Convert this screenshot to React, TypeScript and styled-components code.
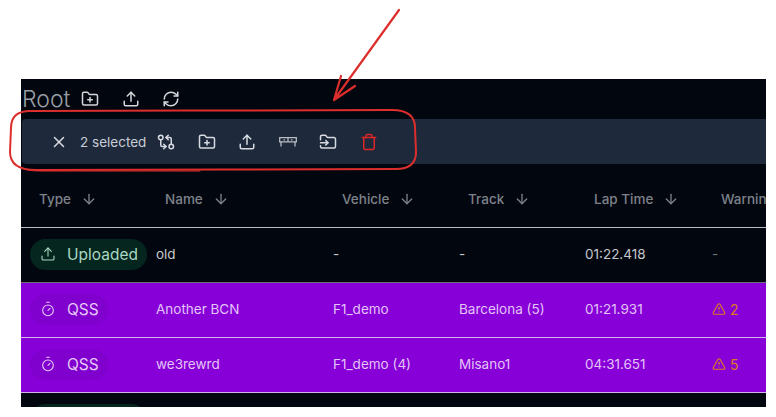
import React from 'react';
import styled, { createGlobalStyle } from 'styled-components';
import {
  ArrowDown,
  FolderInput,
  FolderPlus,
  GitCompareArrows,
  RefreshCw,
  Timer,
  Trash,
  TriangleAlert,
  Upload,
  X,
} from 'lucide-react';

const GlobalStyle = createGlobalStyle`
  html, body {
    margin: 0;
    background: #fff;
    font-family: "Inter", "Liberation Sans", sans-serif;
  }
`;

const columns = ['Type', 'Name', 'Vehicle', 'Track', 'Lap Time', 'Warnings'];

const rows = [
  { kind: 'Uploaded', name: 'old', vehicle: '-', track: '-', lap: '01:22.418', warnings: 0, selected: false },
  { kind: 'QSS', name: 'Another BCN', vehicle: 'F1_demo', track: 'Barcelona (5)', lap: '01:21.931', warnings: 2, selected: true },
  { kind: 'QSS', name: 'we3rewrd', vehicle: 'F1_demo (4)', track: 'Misano1', lap: '04:31.651', warnings: 5, selected: true },
];

const BenchIcon = () => (
  <BenchSvg width="18" height="18" viewBox="0 0 18 18" fill="none" stroke="currentColor" strokeWidth="1.3">
    <path d="M0.7 4.7h16.6v4.2H0.7zM2 8.9v4.6M16 8.9v4.6M9 4.7v4.2M4.5 6.8h1.5M12 6.8h1.5" />
  </BenchSvg>
);

const Annotation = () => (
  <Overlay width="776" height="417" viewBox="0 0 776 417" fill="none" stroke="#dc2f2d" strokeLinecap="round" strokeLinejoin="round">
    <path strokeWidth="2.2" d="M399 10 L334 100 M341 76 L334 100 L355 86" />
    <path
      strokeWidth="2"
      d="M30 111 C140 111 300 110 392 110 C408 110 415 116 415 128 L416 152 C416 164 409 169 396 169 C300 170 120 169 36 170 C20 170 10 165 10 152 L11 128 C11 116 18 111 30 111 Z"
    />
    <path strokeWidth="1" d="M14 163 C20 170 30 171 42 171 L200 171" />
  </Overlay>
);

const App = () => {
  return (
    <Page>
      <GlobalStyle />
      <Panel>
        <TitleRow>
          <RootTitle>Root</RootTitle>
          <TitleIcons>
            <FolderPlus size={18} />
            <Upload size={18} />
            <RefreshCw size={18} />
          </TitleIcons>
        </TitleRow>
        <SelectionBar>
          <X size={18} />
          <SelectedText>2 selected</SelectedText>
          <BarIcons>
            <GitCompareArrows size={18} />
            <FolderPlus size={18} />
            <Upload size={18} />
            <BenchIcon />
            <FolderInput size={18} />
            <DangerIcon>
              <Trash size={18} />
            </DangerIcon>
          </BarIcons>
        </SelectionBar>
        <HeaderRow>
          {columns.map((column) => (
            <HeaderCell key={column}>
              {column}
              <ArrowDown size={16} />
            </HeaderCell>
          ))}
        </HeaderRow>
        {rows.map((row) => (
          <Row key={row.name} $selected={row.selected}>
            <TypeCell>
              <Badge $selected={row.selected}>
                {row.selected ? <Timer size={16} strokeWidth={1.6} /> : <Upload size={16} strokeWidth={1.6} />}
                {row.kind}
              </Badge>
            </TypeCell>
            <Cell>{row.name}</Cell>
            <Cell>{row.vehicle}</Cell>
            <Cell>{row.track}</Cell>
            <Cell>{row.lap}</Cell>
            {row.warnings > 0 ? (
              <WarningCell>
                <TriangleAlert size={14} />
                {row.warnings}
              </WarningCell>
            ) : (
              <MutedCell>-</MutedCell>
            )}
          </Row>
        ))}
        <Row $selected={false}>
          <TypeCell>
            <Badge $selected={false}>
              <Upload size={16} strokeWidth={1.6} />
              Uploaded
            </Badge>
          </TypeCell>
        </Row>
      </Panel>
      <Annotation />
    </Page>
  );
};

const Page = styled.div`
  width: 776px;
  height: 417px;
  box-sizing: border-box;
  padding: 79px 10px 10px 21px;
  overflow: hidden;
`;

const Panel = styled.div`
  height: 328px;
  background: #02060f;
  overflow: hidden;
  filter: blur(0.3px);
`;

const TitleRow = styled.div`
  height: 40px;
  display: flex;
  align-items: center;
  padding-left: 1px;
`;

const RootTitle = styled.div`
  font-size: 23px;
  font-weight: 300;
  line-height: 40px;
  color: #9a9ea5;
  width: 60px;
`;

const TitleIcons = styled.div`
  display: flex;
  gap: 22.5px;
  align-items: center;
  margin-left: -1px;
  color: #d5d7da;
`;

const SelectionBar = styled.div`
  height: 45px;
  margin-left: 1px;
  background: #1e293b;
  border-radius: 4px 0 0 4px;
  display: flex;
  align-items: center;
  padding-left: 28px;
  color: #d8dce2;
`;

const SelectedText = styled.div`
  font-size: 13.5px;
  margin-left: 12px;
  width: 77px;
  white-space: nowrap;
  color: #c9ced6;
`;

const BarIcons = styled.div`
  display: flex;
  align-items: center;
  gap: 22.5px;
`;

const BenchSvg = styled.svg`
  color: #b9bdc4;
`;

const DangerIcon = styled.span`
  display: flex;
  color: #dc2626;
`;

const gridColumns = '135px 177px 126px 126px 127px 1fr';

const HeaderRow = styled.div`
  display: grid;
  grid-template-columns: ${gridColumns};
  height: 63px;
  border-bottom: 1px solid #b9bcc2;
`;

const HeaderCell = styled.div`
  display: flex;
  align-items: center;
  gap: 10px;
  padding: 7px 0 0 9px;
  font-size: 13.5px;
  font-weight: 500;
  color: #7d828a;
  white-space: nowrap;
  overflow: hidden;

  &:first-child {
    padding-left: 18px;
  }
`;

const Row = styled.div<{ $selected: boolean }>`
  display: grid;
  grid-template-columns: ${gridColumns};
  height: 54px;
  border-bottom: 1px solid ${(p) => (p.$selected ? '#d4b3ee' : '#6e7177')};
  background: ${(p) => (p.$selected ? '#8700d8' : 'transparent')};
  color: ${(p) => (p.$selected ? '#e3c4f6' : '#c6c8cc')};
`;

const Cell = styled.div`
  display: flex;
  align-items: center;
  padding-bottom: 2px;
  font-size: 13.5px;
  white-space: nowrap;
`;

const TypeCell = styled(Cell)`
  padding-left: 9px;
`;

const MutedCell = styled(Cell)`
  color: #6f7379;
`;

const WarningCell = styled(Cell)`
  gap: 4px;
  font-size: 14px;
  color: #dc7a22;
`;

const Badge = styled.div<{ $selected: boolean }>`
  display: flex;
  align-items: center;
  gap: 11px;
  height: 31px;
  padding: 0 9px 0 10px;
  border-radius: 16px;
  font-size: 15.5px;
  font-weight: 400;
  background: ${(p) => (p.$selected ? '#8000cd' : '#04261f')};
  color: ${(p) => (p.$selected ? '#e6cbf8' : '#a9d8c2')};
`;

const Overlay = styled.svg`
  position: absolute;
  top: 0;
  left: 0;
  pointer-events: none;
`;

export default App;
